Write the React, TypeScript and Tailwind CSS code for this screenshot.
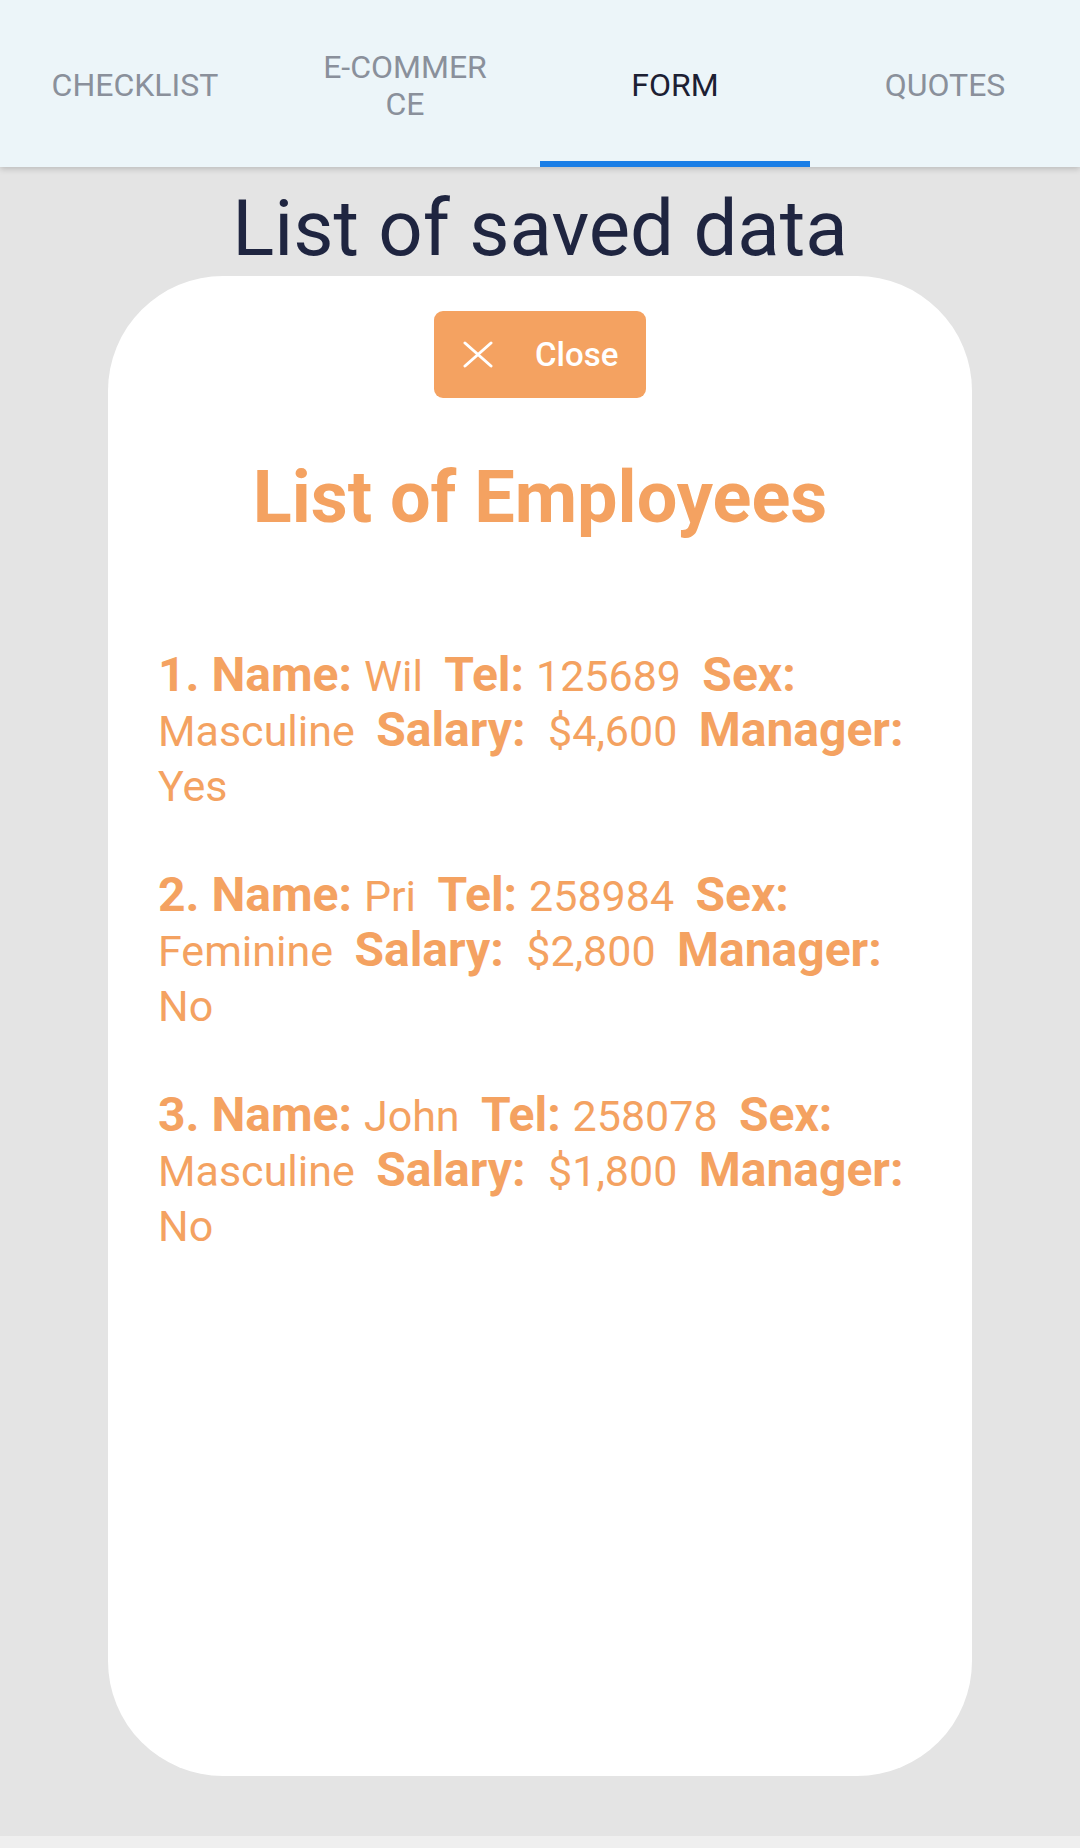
import React from "react";

const employees = [
  { n: 1, name: "Wil", tel: "125689", sex: "Masculine", salary: "$4,600", manager: "Yes" },
  { n: 2, name: "Pri", tel: "258984", sex: "Feminine", salary: "$2,800", manager: "No" },
  { n: 3, name: "John", tel: "258078", sex: "Masculine", salary: "$1,800", manager: "No" },
];

function Tab({ label, active }: { label: React.ReactNode; active?: boolean }) {
  return (
    <div className="relative flex-1 flex items-center justify-center h-full px-[38px] pt-[4px]">
      <div
        className={
          "text-center text-[32px] leading-[37px] " +
          (active ? "text-[#1c2033]" : "text-[#8a909b]")
        }
      >
        {label}
      </div>
      {active && <div className="absolute left-0 right-0 bottom-0 h-[6px] bg-[#1a7ee6]" />}
    </div>
  );
}

function B({ children }: { children: React.ReactNode }) {
  return <b className="font-bold text-[48px] leading-[44px]">{children}</b>;
}

export default function App() {
  return (
    <div
      className="w-[1080px] h-[1848px] bg-[#e4e4e4] flex flex-col overflow-hidden"
      style={{ fontFamily: "Roboto, 'Noto Sans', sans-serif" }}
    >
      <div className="h-[167px] bg-[#ecf5f9] flex shadow-[0_2px_6px_rgba(0,0,0,0.18)] relative z-10 shrink-0">
        <Tab label="CHECKLIST" />
        <Tab
          label={
            <>
              <span className="block">E-COMMER</span>
              <span className="block">CE</span>
            </>
          }
        />
        <Tab label="FORM" active />
        <Tab label="QUOTES" />
      </div>

      <h1 className="mt-[15px] text-center text-[78px] leading-[94px] text-[#1f2540] font-normal">
        List of saved data
      </h1>

      <div className="mx-auto w-[864px] h-[1500px] bg-white rounded-[115px] flex flex-col items-center pt-[35px] shrink-0">
        <button className="w-[212px] h-[87px] rounded-[9px] bg-[#f4a261] flex items-center text-white">
          <svg
            className="ml-[29px]"
            width="30"
            height="27"
            viewBox="0 0 30 27"
            fill="none"
            stroke="white"
            strokeWidth="3"
            strokeLinecap="round"
          >
            <path d="M2 2 L28 25 M28 2 L2 25" />
          </svg>
          <span className="ml-[42px] text-[33px] font-medium">Close</span>
        </button>

        <h2 className="mt-[57px] text-[72px] leading-[86px] font-bold text-[#f4a261]">
          List of Employees
        </h2>

        <div className="mt-[108px] self-stretch px-[50px] flex flex-col gap-[55px]">
          {employees.map((e) => (
            <p
              key={e.n}
              className="text-[43px] leading-[55px] text-[#f4a261] whitespace-pre-wrap"
            >
              <B>{e.n}. Name: </B>
              {e.name}
              {"  "}
              <B>Tel: </B>
              {e.tel}
              {"  "}
              <B>Sex: </B>
              {e.sex}
              {"  "}
              <B>Salary: </B>
              {" " + e.salary}
              {"  "}
              <B>Manager: </B>
              {e.manager}
            </p>
          ))}
        </div>
      </div>

      <div className="flex-1" />
      <div className="h-[12px] bg-[#efefef] shrink-0" />
    </div>
  );
}
